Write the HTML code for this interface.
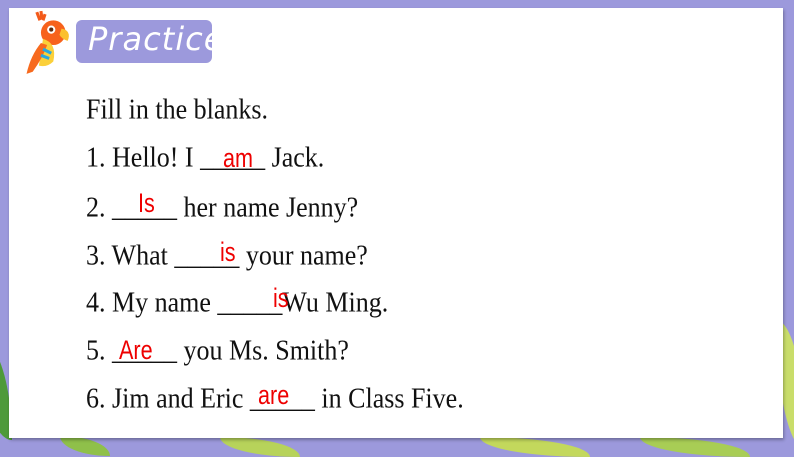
<!DOCTYPE html>
<html><head><style>
body{margin:0;width:794px;height:447px;overflow:hidden;background:#9c99dc;position:relative;font-family:"Liberation Serif",serif;}
.card{position:absolute;left:9px;top:8px;width:774px;height:430px;background:#fff;box-shadow:1px 2px 3px rgba(0,0,0,.3);}
.leaf{position:absolute;border-radius:0 100% 0 100%;}
.tag{position:absolute;left:76px;top:20px;width:136px;height:43px;background:#9c99dc;border-radius:6px;overflow:hidden;}
.tag span{position:absolute;left:12px;top:0px;color:#fff;font-family:"DejaVu Sans",sans-serif;font-style:italic;font-size:32px;letter-spacing:1px;}
.l{position:absolute;left:86px;font-size:26px;line-height:30px;color:#111;white-space:nowrap;transform:scaleY(1.08);transform-origin:left center;}
.r{position:absolute;color:#e00;font-size:27px;line-height:28px;font-family:"Liberation Sans",sans-serif;transform:scaleX(0.8);transform-origin:left top;}
</style></head><body>
<div class="leaf" style="left:-20px;top:340px;width:32px;height:100px;background:#4e9a3a;"></div>
<div class="leaf" style="left:60px;top:436px;width:50px;height:20px;background:#8fc04a;"></div>
<div class="leaf" style="left:220px;top:437px;width:80px;height:20px;background:#b7d35a;"></div>
<div class="leaf" style="left:480px;top:437px;width:110px;height:20px;background:#c3d85c;"></div>
<div class="leaf" style="left:776px;top:320px;width:30px;height:130px;background:#c9dd6a;"></div>
<div class="leaf" style="left:640px;top:437px;width:110px;height:20px;background:#a8cd55;"></div>
<div class="card"></div>
<svg style="position:absolute;left:10px;top:8px" width="66" height="72" viewBox="0 0 60 70">
<path d="M24 4 l3 8 M28 3 l1 8 M32 6 l-2 6" stroke="#f35a1a" stroke-width="3"/>
<ellipse cx="40" cy="24" rx="12" ry="12" fill="#f7621c"/>
<circle cx="38" cy="21" r="4" fill="#fff"/><circle cx="38" cy="21" r="2" fill="#5a2a10"/>
<path d="M48 20 q10 2 6 12 q-6 -2 -8 -6z" fill="#fbc02d"/>
<path d="M30 30 q14 4 10 22 q-6 6 -14 4 z" fill="#fbd03a"/>
<path d="M28 34 q-10 12 -14 30 l6 -2 q10 -14 14 -26z" fill="#f76a1e"/>
<path d="M30 40 l8 4 M28 46 l8 3" stroke="#2aa7df" stroke-width="3"/>
</svg>
<div class="tag"><span>Practice</span></div>
<div class="l" style="top:95px">Fill in the blanks.</div>
<div class="l" style="top:143px">1. Hello! I _____ Jack.</div>
<div class="l" style="top:193px">2. _____ her name Jenny?</div>
<div class="l" style="top:241px">3. What _____ your name?</div>
<div class="l" style="top:288px">4. My name _____Wu Ming.</div>
<div class="l" style="top:336px">5. _____ you Ms. Smith?</div>
<div class="l" style="top:384px">6. Jim and Eric _____ in Class Five.</div>
<div class="r" style="left:223px;top:144px">am</div>
<div class="r" style="left:138px;top:189px">Is</div>
<div class="r" style="left:220px;top:238px">is</div>
<div class="r" style="left:273px;top:284px">is</div>
<div class="r" style="left:119px;top:336px">Are</div>
<div class="r" style="left:258px;top:381px">are</div>
</body></html>
